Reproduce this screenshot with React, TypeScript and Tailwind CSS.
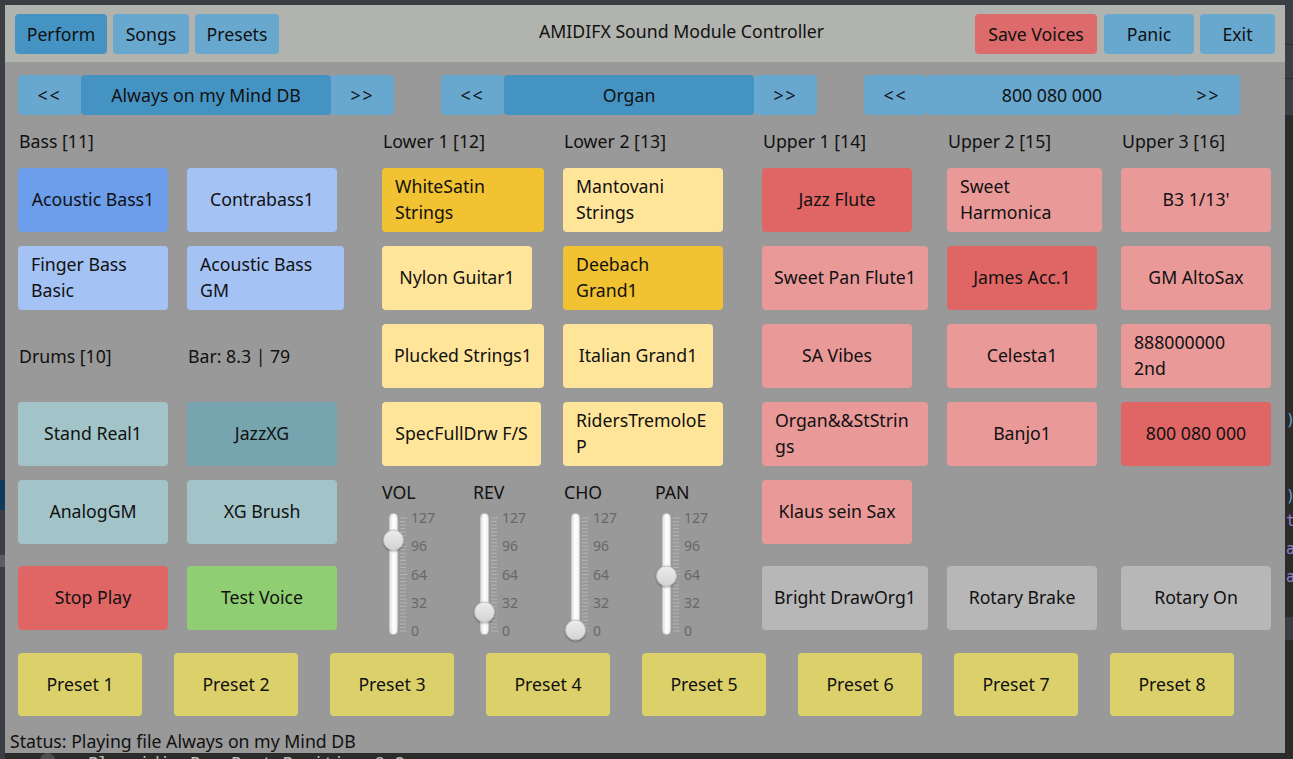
import React from "react";

type B = { label: React.ReactNode; cls: string; two?: boolean };

const Btn = ({ label, cls, two }: B) => (
  <div
    className={`${cls} h-[64px] rounded-[4px] flex items-center ${two ? "justify-start pl-[13px] leading-[26px]" : "justify-center"} text-[17.7px] text-[#111]`}
  >
    <span className={`${two ? "text-left" : "text-center whitespace-nowrap"} -mt-[2px]`}>{label}</span>
  </div>
);

const Label = ({ children, cls = "" }: { children: React.ReactNode; cls?: string }) => (
  <div className={`${cls} text-[17.7px] leading-[24px] text-[#111] pl-[1px] whitespace-nowrap`}>{children}</div>
);

const Slider = ({ name, value }: { name: string; value: number }) => {
  // thumb center from top of track area
  const center = 117 - (value / 127) * 100;
  const ticks = Array.from({ length: 33 }, (_, i) => 5 + (i * 113) / 32);
  const labels = [
    { t: "127", y: 5 },
    { t: "96", y: 33 },
    { t: "64", y: 62 },
    { t: "32", y: 90 },
    { t: "0", y: 118 },
  ];
  return (
    <div className="w-[91px] flex flex-col">
      <div className="text-[17.7px] leading-[20px] text-[#111] mt-[2px]">{name}</div>
      <div className="relative h-[122px] mt-[11px]">
        <div className="absolute left-[7px] top-0 w-[9px] h-[122px] rounded-full bg-gradient-to-r from-[#e2e2e2] via-white to-[#f0f0f0] border border-[#c8c8c8]" />
        <svg className="absolute left-[17px] top-0" width="10" height="122">
          {ticks.map((y, i) => (
            <line key={i} x1="1" x2={i % 8 === 0 ? 8 : 7} y1={y} y2={y} stroke="#b4b4b4" strokeWidth="1" />
          ))}
        </svg>
        {labels.map((l) => (
          <div
            key={l.t}
            className="absolute left-[29px] text-[14px] leading-[16px] text-[#676767] -translate-y-1/2"
            style={{ top: l.y }}
          >
            {l.t}
          </div>
        ))}
        <div
          className="absolute left-[1px] w-[21px] h-[21px] rounded-full bg-gradient-to-b from-[#ececec] to-[#d4d4d4] border border-[#bdbdbd] shadow-[0_1px_2px_rgba(0,0,0,0.35)] -translate-y-1/2"
          style={{ top: center }}
        />
      </div>
    </div>
  );
};

const NavGroup = ({ name, dark }: { name: string; dark: boolean }) => (
  <div className="flex h-[40px] text-[17.7px] text-[#111]">
    <div className="w-[63px] rounded-[4px] bg-[#68a8cf] flex items-center justify-center tracking-[2px]">&lt;&lt;</div>
    <div className={`w-[250px] rounded-[4px] ${dark ? "bg-[#4593c3]" : "bg-[#68a8cf]"} flex items-center justify-center`}>{name}</div>
    <div className="w-[63px] rounded-[4px] bg-[#68a8cf] flex items-center justify-center tracking-[2px]">&gt;&gt;</div>
  </div>
);

export default function App() {
  const presets = ["Preset 1", "Preset 2", "Preset 3", "Preset 4", "Preset 5", "Preset 6", "Preset 7", "Preset 8"];
  return (
    <div className="relative w-[1293px] h-[759px] overflow-hidden bg-[#2b2b2b] font-['Noto_Sans',sans-serif]">
      {/* editor surroundings */}
      <div className="absolute left-0 top-0 w-[1293px] h-[5px] bg-[#3b3e42]" />
      <div className="absolute left-0 top-0 w-[5px] h-[759px] bg-[#3b3e42]" />
      <div className="absolute left-0 top-[480px] w-[5px] h-[30px] bg-[#0f3a5a]" />
      <div className="absolute left-0 top-[555px] w-[5px] h-[12px] bg-[#5a5d61]" />
      <div className="absolute left-[1285px] top-0 w-[8px] h-[115px] bg-[#3c3f43]" />
      <div className="absolute left-[1285px] top-[44px] w-[8px] h-[1px] bg-[#2b2b2b]" />
      <div className="absolute left-[1285px] top-[78px] w-[8px] h-[1px] bg-[#2b2b2b]" />
      <div className="absolute left-[1285px] top-[617px] w-[8px] h-[23px] bg-[#3a3d41]" />
      <div className="absolute left-[1286px] top-[410px] text-[15px] leading-[20px] text-[#6aa6d8] font-['DejaVu_Sans_Mono',monospace]">)</div>
      <div className="absolute left-[1286px] top-[486px] text-[15px] leading-[20px] text-[#6aa6d8] font-['DejaVu_Sans_Mono',monospace]">)</div>
      <div className="absolute left-[1286px] top-[511px] text-[15px] leading-[20px] text-[#9a7fc8] font-['DejaVu_Sans_Mono',monospace]">t</div>
      <div className="absolute left-[1286px] top-[539px] text-[15px] leading-[20px] text-[#9a7fc8] font-['DejaVu_Sans_Mono',monospace]">a</div>
      <div className="absolute left-[1286px] top-[567px] text-[15px] leading-[20px] text-[#9a7fc8] font-['DejaVu_Sans_Mono',monospace]">a</div>
      <div className="absolute left-[40px] top-[753px] w-[15px] h-[15px] rounded-full bg-[#4a4d51]" />
      <div className="absolute left-[88px] top-[753px] text-[17px] leading-[22px] text-[#bdbdbd] font-['DejaVu_Sans_Mono',monospace] whitespace-nowrap">
        Playmidi: Bar.Beat Position 8.2
      </div>

      {/* application window */}
      <div className="absolute left-[5px] top-[5px] w-[1280px] h-[748px] bg-[#999999] flex flex-col overflow-hidden">
        {/* header */}
        <div className="h-[57px] bg-[#b1b3af] flex items-start pt-[9px] pl-[10px] pr-[10px] text-[17.7px] text-[#111]">
          <div className="flex gap-[6px]">
            <div className="w-[92px] h-[40px] rounded-[4px] bg-[#4593c3] flex items-center justify-center">Perform</div>
            <div className="w-[76px] h-[40px] rounded-[4px] bg-[#68a8cf] flex items-center justify-center">Songs</div>
            <div className="w-[84px] h-[40px] rounded-[4px] bg-[#68a8cf] flex items-center justify-center">Presets</div>
          </div>
          <div className="ml-[260px] h-[35px] flex items-center whitespace-nowrap">AMIDIFX Sound Module Controller</div>
          <div className="ml-auto flex">
            <div className="w-[122px] h-[40px] rounded-[4px] bg-[#dd6b6b] flex items-center justify-center">Save Voices</div>
            <div className="ml-[7px] w-[90px] h-[40px] rounded-[4px] bg-[#68a8cf] flex items-center justify-center">Panic</div>
            <div className="ml-[6px] w-[75px] h-[40px] rounded-[4px] bg-[#68a8cf] flex items-center justify-center">Exit</div>
          </div>
        </div>

        {/* nav row */}
        <div className="mt-[13px] pl-[13px] flex gap-[47px]">
          <NavGroup name="Always on my Mind DB" dark={true} />
          <NavGroup name="Organ" dark={true} />
          <NavGroup name="800 080 000" dark={false} />
        </div>

        {/* main grid */}
        <div className="mt-[13px] pl-[13px] grid grid-cols-[169px_195px_181px_199px_185px_174px_150px] grid-rows-[26px_64px_64px_64px_64px_64px_72px] gap-y-[14px]">
          {/* col 1 */}
          <Label cls="col-start-1 row-start-1 self-center">Bass [11]</Label>
          <div className="col-start-1 row-start-2"><Btn cls="w-[150px] bg-[#6d9eeb]" label="Acoustic Bass1" /></div>
          <div className="col-start-1 row-start-3"><Btn two cls="w-[150px] bg-[#a4c2f4]" label={<>Finger Bass<br />Basic</>} /></div>
          <Label cls="col-start-1 row-start-4 self-center">Drums [10]</Label>
          <div className="col-start-1 row-start-5"><Btn cls="w-[150px] bg-[#a2c4c9]" label="Stand Real1" /></div>
          <div className="col-start-1 row-start-6"><Btn cls="w-[150px] bg-[#a2c4c9]" label="AnalogGM" /></div>
          <div className="col-start-1 row-start-7 self-end"><Btn cls="w-[150px] bg-[#e06666]" label="Stop Play" /></div>

          {/* col 2 */}
          <div className="col-start-2 row-start-2"><Btn cls="w-[150px] bg-[#a4c2f4]" label="Contrabass1" /></div>
          <div className="col-start-2 row-start-3"><Btn two cls="w-[157px] bg-[#a4c2f4]" label={<>Acoustic Bass<br />GM</>} /></div>
          <Label cls="col-start-2 row-start-4 self-center">Bar: 8.3 | 79</Label>
          <div className="col-start-2 row-start-5"><Btn cls="w-[150px] bg-[#76a5af]" label="JazzXG" /></div>
          <div className="col-start-2 row-start-6"><Btn cls="w-[150px] bg-[#a2c4c9]" label="XG Brush" /></div>
          <div className="col-start-2 row-start-7 self-end"><Btn cls="w-[150px] bg-[#8fce72]" label="Test Voice" /></div>

          {/* col 3 */}
          <Label cls="col-start-3 row-start-1 self-center">Lower 1 [12]</Label>
          <div className="col-start-3 row-start-2"><Btn two cls="w-[162px] bg-[#f1c232]" label={<>WhiteSatin<br />Strings</>} /></div>
          <div className="col-start-3 row-start-3"><Btn cls="w-[150px] bg-[#ffe599]" label="Nylon Guitar1" /></div>
          <div className="col-start-3 row-start-4"><Btn cls="w-[162px] bg-[#ffe599]" label="Plucked Strings1" /></div>
          <div className="col-start-3 row-start-5"><Btn cls="w-[159px] bg-[#ffe599]" label="SpecFullDrw F/S" /></div>
          <div className="col-start-3 col-span-2 row-start-6 row-span-2 flex">
            <Slider name="VOL" value={114} />
            <Slider name="REV" value={23} />
            <Slider name="CHO" value={0} />
            <Slider name="PAN" value={69} />
          </div>

          {/* col 4 */}
          <Label cls="col-start-4 row-start-1 self-center">Lower 2 [13]</Label>
          <div className="col-start-4 row-start-2"><Btn two cls="w-[160px] bg-[#ffe599]" label={<>Mantovani<br />Strings</>} /></div>
          <div className="col-start-4 row-start-3"><Btn two cls="w-[160px] bg-[#f1c232]" label={<>Deebach<br />Grand1</>} /></div>
          <div className="col-start-4 row-start-4"><Btn cls="w-[150px] bg-[#ffe599]" label="Italian Grand1" /></div>
          <div className="col-start-4 row-start-5"><Btn two cls="w-[160px] bg-[#ffe599]" label={<>RidersTremoloE<br />P</>} /></div>

          {/* col 5 */}
          <Label cls="col-start-5 row-start-1 self-center">Upper 1 [14]</Label>
          <div className="col-start-5 row-start-2"><Btn cls="w-[150px] bg-[#e06666]" label="Jazz Flute" /></div>
          <div className="col-start-5 row-start-3"><Btn cls="w-[166px] bg-[#ea9999]" label="Sweet Pan Flute1" /></div>
          <div className="col-start-5 row-start-4"><Btn cls="w-[150px] bg-[#ea9999]" label="SA Vibes" /></div>
          <div className="col-start-5 row-start-5"><Btn two cls="w-[166px] bg-[#ea9999]" label={<>Organ&amp;&amp;StStrin<br />gs</>} /></div>
          <div className="col-start-5 row-start-6"><Btn cls="w-[150px] bg-[#ea9999]" label="Klaus sein Sax" /></div>
          <div className="col-start-5 row-start-7 self-end"><Btn cls="w-[166px] bg-[#b7b7b7]" label="Bright DrawOrg1" /></div>

          {/* col 6 */}
          <Label cls="col-start-6 row-start-1 self-center">Upper 2 [15]</Label>
          <div className="col-start-6 row-start-2"><Btn two cls="w-[155px] bg-[#ea9999]" label={<>Sweet<br />Harmonica</>} /></div>
          <div className="col-start-6 row-start-3"><Btn cls="w-[150px] bg-[#e06666]" label="James Acc.1" /></div>
          <div className="col-start-6 row-start-4"><Btn cls="w-[150px] bg-[#ea9999]" label="Celesta1" /></div>
          <div className="col-start-6 row-start-5"><Btn cls="w-[150px] bg-[#ea9999]" label="Banjo1" /></div>
          <div className="col-start-6 row-start-7 self-end"><Btn cls="w-[150px] bg-[#b7b7b7]" label="Rotary Brake" /></div>

          {/* col 7 */}
          <Label cls="col-start-7 row-start-1 self-center">Upper 3 [16]</Label>
          <div className="col-start-7 row-start-2"><Btn cls="w-[150px] bg-[#ea9999]" label="B3 1/13'" /></div>
          <div className="col-start-7 row-start-3"><Btn cls="w-[150px] bg-[#ea9999]" label="GM AltoSax" /></div>
          <div className="col-start-7 row-start-4"><Btn two cls="w-[150px] bg-[#ea9999]" label={<>888000000<br />2nd</>} /></div>
          <div className="col-start-7 row-start-5"><Btn cls="w-[150px] bg-[#e06666]" label="800 080 000" /></div>
          <div className="col-start-7 row-start-7 self-end"><Btn cls="w-[150px] bg-[#b7b7b7]" label="Rotary On" /></div>
        </div>

        {/* presets */}
        <div className="mt-[23px] pl-[13px] flex gap-[32px]">
          {presets.map((p) => (
            <div key={p} className="w-[124px] h-[63px] rounded-[4px] bg-[#dcd06b] flex items-center justify-center text-[17.7px] text-[#111]">
              {p}
            </div>
          ))}
        </div>

        {/* status */}
        <div className="mt-[13px] pl-[5px] text-[17.7px] leading-[24px] text-[#111] whitespace-nowrap">
          Status: Playing file Always on my Mind DB
        </div>
      </div>
    </div>
  );
}
